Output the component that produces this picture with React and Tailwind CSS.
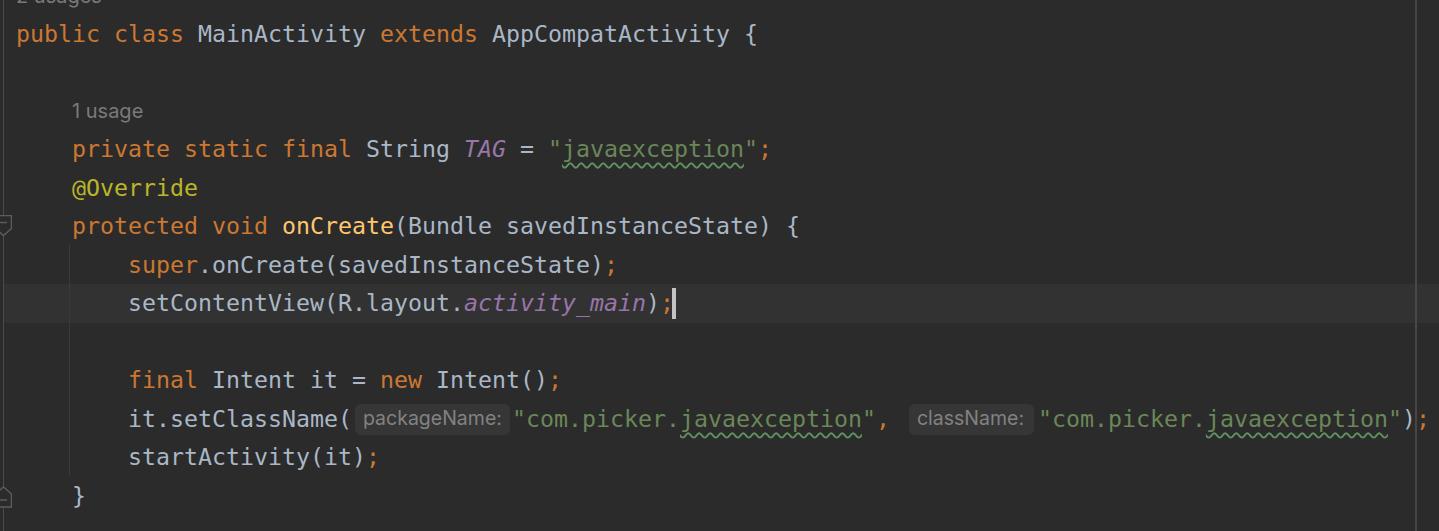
import React from "react";

// Darcula token colours
const kw = "text-[#cc7832]";
const txt = "text-[#a9b7c6]";
const fn = "text-[#ffc66d]";
const str = "text-[#6a8759]";
const ann = "text-[#bbb529]";
const cst = "text-[#9876aa] italic";

// 4 spaces of indent = 56px
const indents = ["pl-[12px]", "pl-[68px]", "pl-[124px]"];

const Typo = ({ children }) => (
  <span className="underline decoration-wavy decoration-[#5f925f] decoration-[1.5px] underline-offset-[5px]">
    {children}
  </span>
);

const Hint = ({ children }) => (
  <span className="font-['Inter',sans-serif] text-[20px] text-[#7a7a7a]">
    {children}
  </span>
);

const Inlay = ({ children, className }) => (
  <span
    className={
      "inline-flex items-center h-[31px] pl-[8px] rounded-[6px] bg-[#363636] font-['Inter',sans-serif] text-[19.5px] text-[#828282] " +
      className
    }
  >
    {children}
  </span>
);

const Row = ({ children, active, indent = 0 }) => (
  <div
    className={
      "h-[38.5px] shrink-0 flex items-center whitespace-pre " +
      indents[indent] +
      (active ? " bg-[#323232]" : "")
    }
  >
    {children}
  </div>
);

const FoldDown = () => (
  <svg
    className="absolute left-[-5px] top-[215px]"
    width="17"
    height="22"
    viewBox="0 0 17 22"
  >
    <path
      d="M0.5 0.5 H16.5 V13.5 L8.5 20.5 L0.5 13.5 Z"
      fill="#2b2b2b"
      stroke="#5c5c5c"
      strokeWidth="1.5"
    />
    <path d="M5 7.5 H12" stroke="#5c5c5c" strokeWidth="1.5" />
  </svg>
);

const FoldUp = () => (
  <svg
    className="absolute left-[-5px] top-[486px]"
    width="17"
    height="22"
    viewBox="0 0 17 22"
  >
    <path
      d="M0.5 21 H16.5 V8 L8.5 1 L0.5 8 Z"
      fill="#2b2b2b"
      stroke="#5c5c5c"
      strokeWidth="1.5"
    />
    <path d="M5 14 H12" stroke="#5c5c5c" strokeWidth="1.5" />
  </svg>
);

export default function App() {
  return (
    <div className="relative w-[1439px] h-[531px] overflow-hidden bg-[#2b2b2b] flex font-['DejaVu_Sans_Mono',monospace] text-[23.25px] text-[#a9b7c6]">
      {/* gutter */}
      <div className="w-[4px] shrink-0 border-r border-[#4a4a4a]" />

      <div className="relative flex-1 flex flex-col -mt-[23.75px]">
        <Row>
          <Hint>2 usages</Hint>
        </Row>
        <Row>
          <span className={kw}>public class </span>
          <span className={txt}>MainActivity </span>
          <span className={kw}>extends </span>
          <span className={txt}>AppCompatActivity {"{"}</span>
        </Row>
        <Row />
        <Row indent={1}>
          <Hint>1 usage</Hint>
        </Row>
        <Row indent={1}>
          <span className={kw}>private static final </span>
          <span className={txt}>String </span>
          <span className={cst}>TAG</span>
          <span className={txt}> = </span>
          <span className={str}>
            "<Typo>javaexception</Typo>"
          </span>
          <span className={kw}>;</span>
        </Row>
        <Row indent={1}>
          <span className={ann}>@Override</span>
        </Row>
        <Row indent={1}>
          <span className={kw}>protected void </span>
          <span className={fn}>onCreate</span>
          <span className={txt}>(Bundle savedInstanceState) {"{"}</span>
        </Row>
        <Row indent={2}>
          <span className={kw}>super</span>
          <span className={txt}>.onCreate(savedInstanceState)</span>
          <span className={kw}>;</span>
        </Row>
        <Row indent={2} active>
          <span className={txt}>setContentView(R.layout.</span>
          <span className={cst}>activity_main</span>
          <span className={txt}>)</span>
          <span className={kw}>;</span>
          <span className="w-[4px] h-[31px] -ml-[2px] bg-[#c4c4c4]" />
        </Row>
        <Row />
        <Row indent={2}>
          <span className={kw}>final </span>
          <span className={txt}>Intent it = </span>
          <span className={kw}>new </span>
          <span className={txt}>Intent()</span>
          <span className={kw}>;</span>
        </Row>
        <Row indent={2}>
          <span className={txt}>it.setClassName(</span>
          <Inlay className="w-[155px] ml-[3px] mr-[2px]">packageName:</Inlay>
          <span className={str}>
            "com.picker.<Typo>javaexception</Typo>"
          </span>
          <span className={kw}>, </span>
          <Inlay className="w-[125px] ml-[5px] mr-[4px]">className:</Inlay>
          <span className={str}>
            "com.picker.<Typo>javaexception</Typo>"
          </span>
          <span className={txt}>)</span>
          <span className={kw}>;</span>
        </Row>
        <Row indent={2}>
          <span className={txt}>startActivity(it)</span>
          <span className={kw}>;</span>
        </Row>
        <Row indent={1}>
          <span className={txt}>{"}"}</span>
        </Row>
        <Row />

        {/* indent guide of the method body */}
        <div className="absolute left-[65px] top-[268px] w-[1px] h-[232px] bg-[#3a3a3a]" />
        {/* right margin */}
        <div className="absolute left-[1411px] top-0 w-[1.5px] h-[600px] bg-[#474747]" />
      </div>

      <FoldDown />
      <FoldUp />
    </div>
  );
}
